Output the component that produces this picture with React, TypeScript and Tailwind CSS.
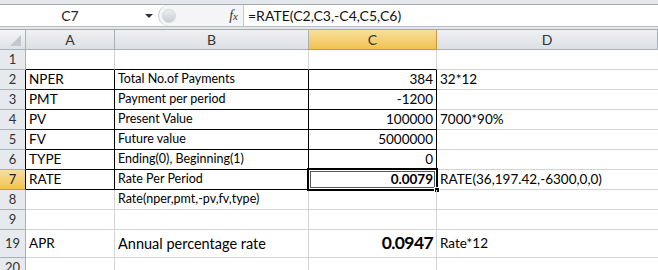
import React from "react"

const cols = ["A", "B", "C", "D"]

type Row = {
  n: string
  h: string
  a?: string
  b?: string
  c?: string
  d?: string
  boxed?: boolean
  big?: boolean
}

const rows: Row[] = [
  { n: "1", h: "h-[20px]" },
  { n: "2", h: "h-[20px]", a: "NPER", b: "Total No.of Payments", c: "384", d: "32*12", boxed: true },
  { n: "3", h: "h-[20px]", a: "PMT", b: "Payment per period", c: "-1200", boxed: true },
  { n: "4", h: "h-[20px]", a: "PV", b: "Present Value", c: "100000", d: "7000*90%", boxed: true },
  { n: "5", h: "h-[20px]", a: "FV", b: "Future value", c: "5000000", boxed: true },
  { n: "6", h: "h-[20px]", a: "TYPE", b: "Ending(0), Beginning(1)", c: "0", boxed: true },
  { n: "7", h: "h-[20px]", a: "RATE", b: "Rate Per Period", c: "0.0079", d: "RATE(36,197.42,-6300,0,0)", boxed: true },
  { n: "8", h: "h-[20px]", b: "Rate(nper,pmt,-pv,fv,type)" },
  { n: "9", h: "h-[20px]" },
  { n: "19", h: "h-[28px]", a: "APR", b: "Annual percentage rate", c: "0.0947", d: "Rate*12", big: true },
  { n: "20", h: "h-[20px]" },
]

export default function App() {
  return (
    <div className="w-[658px] h-[270px] overflow-hidden bg-white font-['Lato','Liberation_Sans',sans-serif] text-[#000]">
      {/* ribbon edge */}
      <div className="h-[5px] bg-[#e3e6ea] border-b border-[#a7abb0]" />

      {/* formula bar */}
      <div className="flex h-[22px] bg-white border-b border-[#b9bdc3]">
        <div className="w-[140px] flex items-center justify-center text-[14px] text-[#222]">C7</div>
        <div className="w-[18px] flex items-center justify-center">
          <div className="w-0 h-0 border-l-[4px] border-r-[4px] border-t-[4px] border-l-transparent border-r-transparent border-t-[#333]" />
        </div>
        <div className="w-[86px] flex items-center bg-[#f4f5f7] border-x border-[#c6cad0] rounded-l-[11px]">
          <div className="ml-[3px] w-[14px] h-[14px] rounded-full bg-gradient-to-b from-[#eceef1] to-[#c8ccd2] border border-[#d5d8dc]" />
          <span className="ml-auto mr-[5px] font-['Liberation_Serif',serif] italic text-[14px] text-[#333]">
            f<span className="text-[11px]">x</span>
          </span>
        </div>
        <div className="flex-1 flex items-center pl-[4px] text-[14px] text-[#111]">=RATE(C2,C3,-C4,C5,C6)</div>
      </div>
      <div className="h-[3px] bg-[#e3e6ea] border-b border-[#a7abb0]" />

      {/* grid */}
      <div className="grid grid-cols-[26px_89px_194px_128px_1fr]">
        <div className="h-[20px] bg-gradient-to-b from-[#f3f4f6] to-[#dfe2e6] border-r border-b border-[#a9b0b8] flex items-end justify-end pr-[4px] pb-[3px]">
          <svg width="11" height="11" viewBox="0 0 11 11">
            <polygon points="11,0 11,11 0,11" fill="#c3c8ce" />
          </svg>
        </div>
        {cols.map((c) => (
          <div
            key={c}
            className={`h-[20px] flex items-center justify-center text-[14px] border-r border-b ${
              c === "C"
                ? "bg-gradient-to-b from-[#f9df9a] to-[#f1c24f] border-[#c29a40] text-[#333]"
                : "bg-gradient-to-b from-[#eef0f2] to-[#dde0e4] border-[#a9b0b8] text-[#333]"
            }`}
          >
            {c}
          </div>
        ))}

        {rows.map((r, i) => {
          const next = rows[i + 1]
          const bottomBlack = r.boxed || (next && next.boxed)
          const sel = r.n === "7"
          const gridB = bottomBlack ? "border-b-black" : "border-b-[#d4d4d4]"
          const gridR = r.boxed ? "border-r-black" : "border-r-[#d4d4d4]"
          return (
            <React.Fragment key={r.n}>
              <div
                className={`${r.h} flex items-center justify-center text-[13px] border-r border-b ${
                  sel
                    ? "bg-gradient-to-b from-[#f9df9a] to-[#f1c24f] text-[#222] border-b-[#c29a40]"
                    : "bg-[#e6e9ed] text-[#333] border-b-[#a9b0b8]"
                } ${r.boxed ? "border-r-black" : "border-r-[#a9b0b8]"}`}
              >
                {r.n}
              </div>
              <div className={`${r.h} flex items-center pl-[3px] text-[13.5px] border-r border-b ${gridB} ${gridR}`}>
                {r.a}
              </div>
              <div
                className={`${r.h} flex items-center pl-[3px] ${r.big ? "text-[14.5px]" : "text-[12.5px]"} border-r border-b ${gridB} ${gridR}`}
              >
                {r.b}
              </div>
              <div
                className={`relative ${r.h} flex items-center justify-end pr-[3px] ${
                  r.big ? "text-[17.5px] font-bold tracking-[-0.6px]" : sel ? "text-[13.5px] font-bold" : "text-[13.5px]"
                } border-r border-b ${gridB} ${gridR}`}
              >
                {r.c}
                {sel && (
                  <div className="absolute left-[-2px] top-[-2px] right-[-2px] bottom-[-2px] border-2 border-black">
                    <div className="absolute inset-[1px] border border-[#555]" />
                    <div className="absolute right-[-4px] bottom-[-4px] w-[6px] h-[6px] bg-black border border-white" />
                  </div>
                )}
              </div>
              <div className={`${r.h} flex items-center pl-[3px] text-[13.5px] border-b border-b-[#d4d4d4]`}>{r.d}</div>
            </React.Fragment>
          )
        })}
      </div>
    </div>
  )
}
